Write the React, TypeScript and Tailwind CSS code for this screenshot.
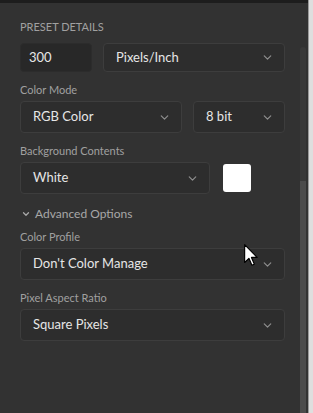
import { ChevronDown } from "lucide-react";

const font = { fontFamily: "Lato, 'Noto Sans', sans-serif" };

function Select({ label, className, short }: { label: string; className?: string; short?: boolean }) {
  return (
    <div
      className={`flex items-center justify-between rounded-[4px] border border-[#3d3d3d] bg-[#2d2d2d] pl-[12px] pr-[10px] text-[13px] text-[#e6e6e6] ${short ? "h-[29px]" : "h-[32px]"} ${className ?? ""}`}
    >
      <span>{label}</span>
      <ChevronDown size={13} strokeWidth={2.2} className="text-[#8e8e8e]" />
    </div>
  );
}

function Label({ children, className }: { children: React.ReactNode; className?: string }) {
  return <p className={`h-[16px] text-[11px] leading-[16px] text-[#a0a0a0] ${className ?? ""}`}>{children}</p>;
}

function Cursor() {
  return (
    <svg width="14" height="22" viewBox="0 0 12 19" className="absolute left-[244px] top-[244px]">
      <path d="M0.5 0.5 L0.5 16 L4.2 12.4 L6.8 18.3 L8.9 17.4 L6.4 11.6 L11.3 11.6 Z" fill="#fff" stroke="#000" strokeWidth="1" strokeLinejoin="round" />
    </svg>
  );
}

export default function App() {
  return (
    <div className="relative flex h-[413px] w-[313px] overflow-hidden bg-[#323232]" style={font}>
      <div className="absolute left-0 right-[5px] top-0 h-[3px] bg-[#1d1d1d]" />
      <div className="ml-[20px] w-[265px] shrink-0 pt-[19px]">
        <p className="h-[16px] text-[11px] uppercase leading-[16px] text-[#a0a0a0]">Preset Details</p>
        <div className="mt-[8px] flex gap-[11px]">
          <div className="flex h-[29px] w-[72px] items-center rounded-[4px] border border-[#2c2c2c] bg-[#282828] pl-[8px] text-[13px] text-[#e6e6e6]">
            300
          </div>
          <Select label="Pixels/Inch" short className="flex-1" />
        </div>

        <Label className="mt-[10px]">Color Mode</Label>
        <div className="mt-[3px] flex gap-[11px]">
          <Select label="RGB Color" className="w-[162px]" />
          <Select label="8 bit" className="flex-1" />
        </div>

        <Label className="mt-[10px]">Background Contents</Label>
        <div className="mt-[3px] flex items-center">
          <Select label="White" className="w-[190px]" />
          <div className="ml-[13px] h-[28px] w-[28px] rounded-[3px] bg-white" />
        </div>

        <div className="mt-[12px] flex h-[16px] items-center text-[12px] text-[#a8a8a8]">
          <ChevronDown size={10} strokeWidth={3} className="ml-[1px] mr-[4px] text-[#a8a8a8]" />
          <span>Advanced Options</span>
        </div>

        <Label className="mt-[7px]">Color Profile</Label>
        <Select label="Don't Color Manage" className="mt-[3px]" />

        <Label className="mt-[10px]">Pixel Aspect Ratio</Label>
        <Select label="Square Pixels" className="mt-[3px]" />
      </div>

      <div className="ml-[15px] mt-[47px] flex w-[6px] flex-col rounded-t-[3px] bg-[#393939]">
        <div className="mt-[134px] flex-1 bg-[#4b4b4b]" />
      </div>
      <div className="ml-[2px] w-[5px] border-l border-[#9a9a9a] bg-[#dedede]" />
      <Cursor />
    </div>
  );
}
